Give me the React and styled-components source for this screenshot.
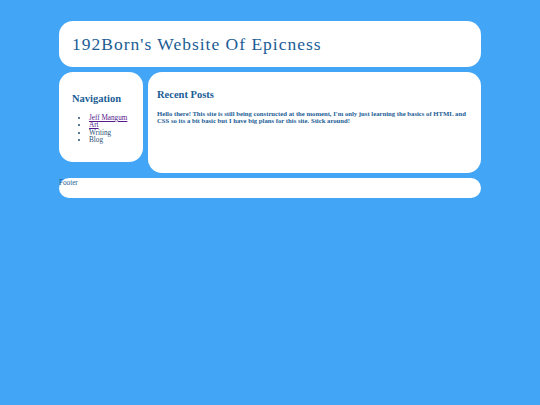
import React from "react";
import styled, { createGlobalStyle } from "styled-components";

const Global = createGlobalStyle`
    html, body {
        margin: 0;
        padding: 0;
        background: #42a5f5;
        font-family: "Liberation Serif", "Times New Roman", serif;
        color: #1b5d95;
    }
`;

const Page = styled.div`
    width: 422px;
    margin: 0 auto;
    padding-top: 21px;
    display: flex;
    flex-direction: column;
    gap: 5px;
`;

const Header = styled.header`
    background: white;
    border-radius: 14px;
    height: 46px;
    display: flex;
    align-items: center;
    padding-left: 13px;
`;

const Title = styled.h1`
    margin: 0;
    font-family: "Liberation Serif", "Times New Roman", serif;
    font-weight: normal;
    font-size: 17.5px;
    letter-spacing: 1px;
    color: #1b5d95;
`;

const Middle = styled.div`
    display: flex;
    align-items: flex-start;
    gap: 5px;
`;

const Box = styled.div`
    background: white;
    border-radius: 14px;
    box-sizing: border-box;
    width: ${p => p.width}px;
    height: ${p => p.height}px;
    padding: ${p => p.pad};
    flex: ${p => (p.grow ? 1 : "none")};
`;

const Heading = styled.h2`
    margin: 0;
    font-family: "Liberation Serif", "Times New Roman", serif;
    font-size: 10.5px;
    font-weight: bold;
`;

const List = styled.ul`
    margin: 11px 0 0;
    padding-left: 17px;
    font-size: 7.2px;
    line-height: 7.4px;
    color: #2a4f73;
`;

const Link = styled.a`
    color: #551a8b;
    text-decoration: underline;
`;

const Text = styled.p`
    margin: 10px 0 0;
    font-size: 6.7px;
    line-height: 7.4px;
    font-weight: bold;
`;

const Footer = styled.footer`
    background: white;
    border-radius: 10px;
    height: 20px;
    font-size: 7.2px;
    line-height: 8px;
    padding-top: 1px;
    box-sizing: border-box;
`;

export default function App() {
    return (
        <>
            <Global />
            <Page>
                <Header>
                    <Title>192Born's Website Of Epicness</Title>
                </Header>
                <Middle>
                    <Box width={84} height={90} pad="21px 8px 0 13px">
                        <Heading>Navigation</Heading>
                        <List>
                            <li><Link href="#">Jeff Mangum</Link></li>
                            <li><Link href="#">Art</Link></li>
                            <li>Writing</li>
                            <li>Blog</li>
                        </List>
                    </Box>
                    <Box grow height={101} pad="17px 10px 0 9px">
                        <Heading>Recent Posts</Heading>
                        <Text>
                            Hello there! This site is still being constructed at the moment, I'm only just learning the basics of HTML and CSS so its a bit basic but I have big plans for this site. Stick around!
                        </Text>
                    </Box>
                </Middle>
                <Footer>Footer</Footer>
            </Page>
        </>
    );
}
